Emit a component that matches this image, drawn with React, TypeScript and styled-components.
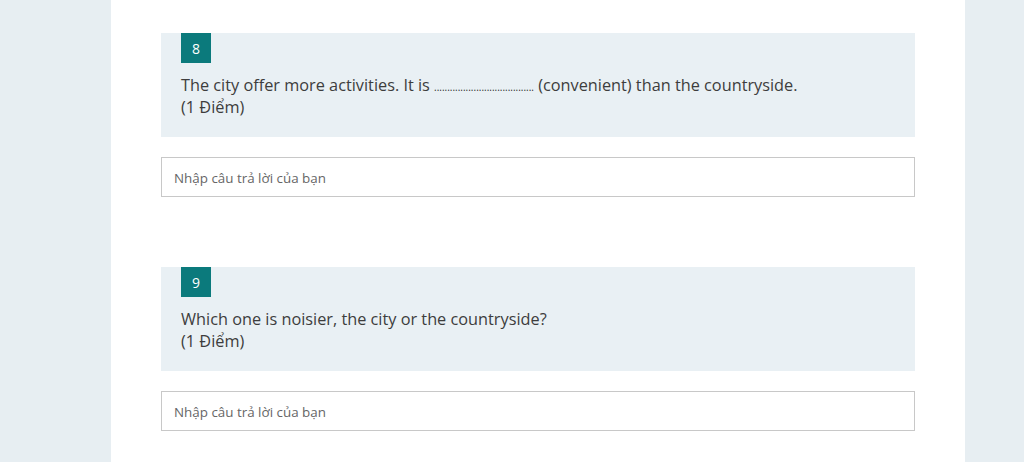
import React from "react";
import styled, { createGlobalStyle } from "styled-components";

const Global = createGlobalStyle`
  html, body { margin: 0; padding: 0; background: #e7eef2; }
  body { font-family: "Open Sans", "Noto Sans", sans-serif; }
`;

const Page = styled.div`
  width: 1024px;
  height: 462px;
  overflow: hidden;
  background: #e7eef2;
  display: flex;
  justify-content: flex-start;
`;

const Card = styled.main`
  margin-left: 111px;
  width: 854px;
  height: 462px;
  background: #ffffff;
  padding: 33px 50px 0 50px;
  box-sizing: border-box;
  display: flex;
  flex-direction: column;
`;

const Question = styled.section`
  display: flex;
  flex-direction: column;
  margin-bottom: 70px;
`;

const Prompt = styled.div`
  background: #e9f0f4;
  height: 104px;
  box-sizing: border-box;
  padding: 0 20px;
  display: flex;
  flex-direction: column;
  align-items: flex-start;
`;

const Badge = styled.div`
  width: 30px;
  height: 30px;
  background: #0b7a7c;
  color: #ffffff;
  font-size: 14px;
  display: flex;
  align-items: center;
  justify-content: center;
`;

const Title = styled.div`
  margin-top: 11px;
  font-size: 16.3px;
  line-height: 22px;
  color: #3d3d3d;
`;

const Dots = styled.span`
  font-size: 10px;
  line-height: 1;
  color: #2e2e2e;
`;

const Answer = styled.input`
  margin-top: 20px;
  height: 40px;
  box-sizing: border-box;
  border: 1px solid #c8c8c8;
  background: #fff;
  padding: 2px 12px 0 12px;
  font-family: "Open Sans", "Noto Sans", sans-serif;
  font-size: 13.4px;
  outline: none;
  &::placeholder { color: #666; }
`;

const questions = [
  {
    n: 8,
    text: (
      <>
        The city offer more activities. It is <Dots>{".".repeat(38)}</Dots> (convenient) than the countryside.
      </>
    ),
  },
  { n: 9, text: <>Which one is noisier, the city or the countryside?</> },
];

export default function App() {
  return (
    <>
      <Global />
      <Page>
        <Card>
          {questions.map((q) => (
            <Question key={q.n}>
              <Prompt>
                <Badge>{q.n}</Badge>
                <Title>
                  {q.text}
                  <br />
                  (1 Điểm)
                </Title>
              </Prompt>
              <Answer placeholder="Nhập câu trả lời của bạn" />
            </Question>
          ))}
        </Card>
      </Page>
    </>
  );
}
